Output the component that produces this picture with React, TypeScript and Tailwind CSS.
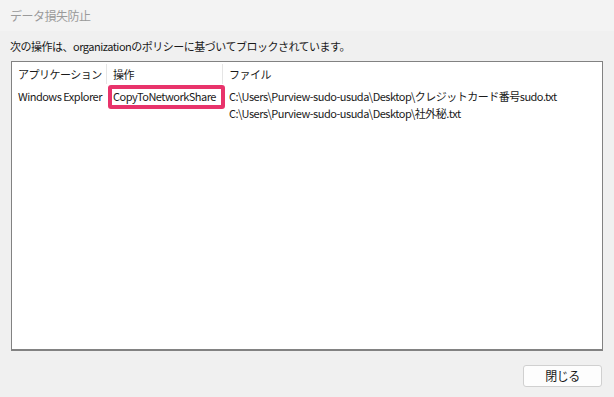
const files = [
  "C:\\Users\\Purview-sudo-usuda\\Desktop\\クレジットカード番号sudo.txt",
  "C:\\Users\\Purview-sudo-usuda\\Desktop\\社外秘.txt",
]

export default function App() {
  return (
    <div
      className="w-[614px] h-[397px] bg-[#f0f0f0] flex flex-col text-[11px] tracking-[-0.5px] text-[#1a1a1a] whitespace-nowrap"
      style={{ fontFamily: '"Segoe UI", "Noto Sans CJK JP", sans-serif' }}
    >
      <div className="h-[31px] bg-[#f3f3f3] flex items-center pl-[10px] text-[#9a9a9a] text-[12px]">
        データ損失防止
      </div>
      <div className="pl-[10px] pt-[6px] h-[30px] leading-[18px]">
        次の操作は、organizationのポリシーに基づいてブロックされています。
      </div>
      <div className="mx-[11px] h-[290px] bg-white border border-[#828282] border-b-2">
        <div className="flex h-[24px] items-center leading-[20px]">
          <div className="w-[95px] pl-[6px] border-r border-[#e5e5e5] h-[20px]">アプリケーション</div>
          <div className="w-[116px] pl-[6px] border-r border-[#e5e5e5] h-[20px]">操作</div>
          <div className="pl-[6px] h-[20px]">ファイル</div>
        </div>
        <div className="flex leading-[17px] pt-[2px]">
          <div className="w-[95px] pl-[6px]">Windows Explorer</div>
          <div className="w-[116px] relative pl-[6px]">
            CopyToNetworkShare
            <div className="absolute left-[1px] top-[-3px] w-[117px] h-[24px] border-[4px] border-[#e8336b] rounded-[3px]" />
          </div>
          <div className="pl-[6px] flex flex-col">
            {files.map((f) => (
              <div key={f}>{f}</div>
            ))}
          </div>
        </div>
      </div>
      <div className="flex justify-end pr-[12px] pt-[14px]">
        <button className="w-[79px] h-[22px] bg-[#fdfdfd] border border-[#d0d0d0] rounded-[3px] text-[12px] leading-[18px]">
          閉じる
        </button>
      </div>
    </div>
  )
}
